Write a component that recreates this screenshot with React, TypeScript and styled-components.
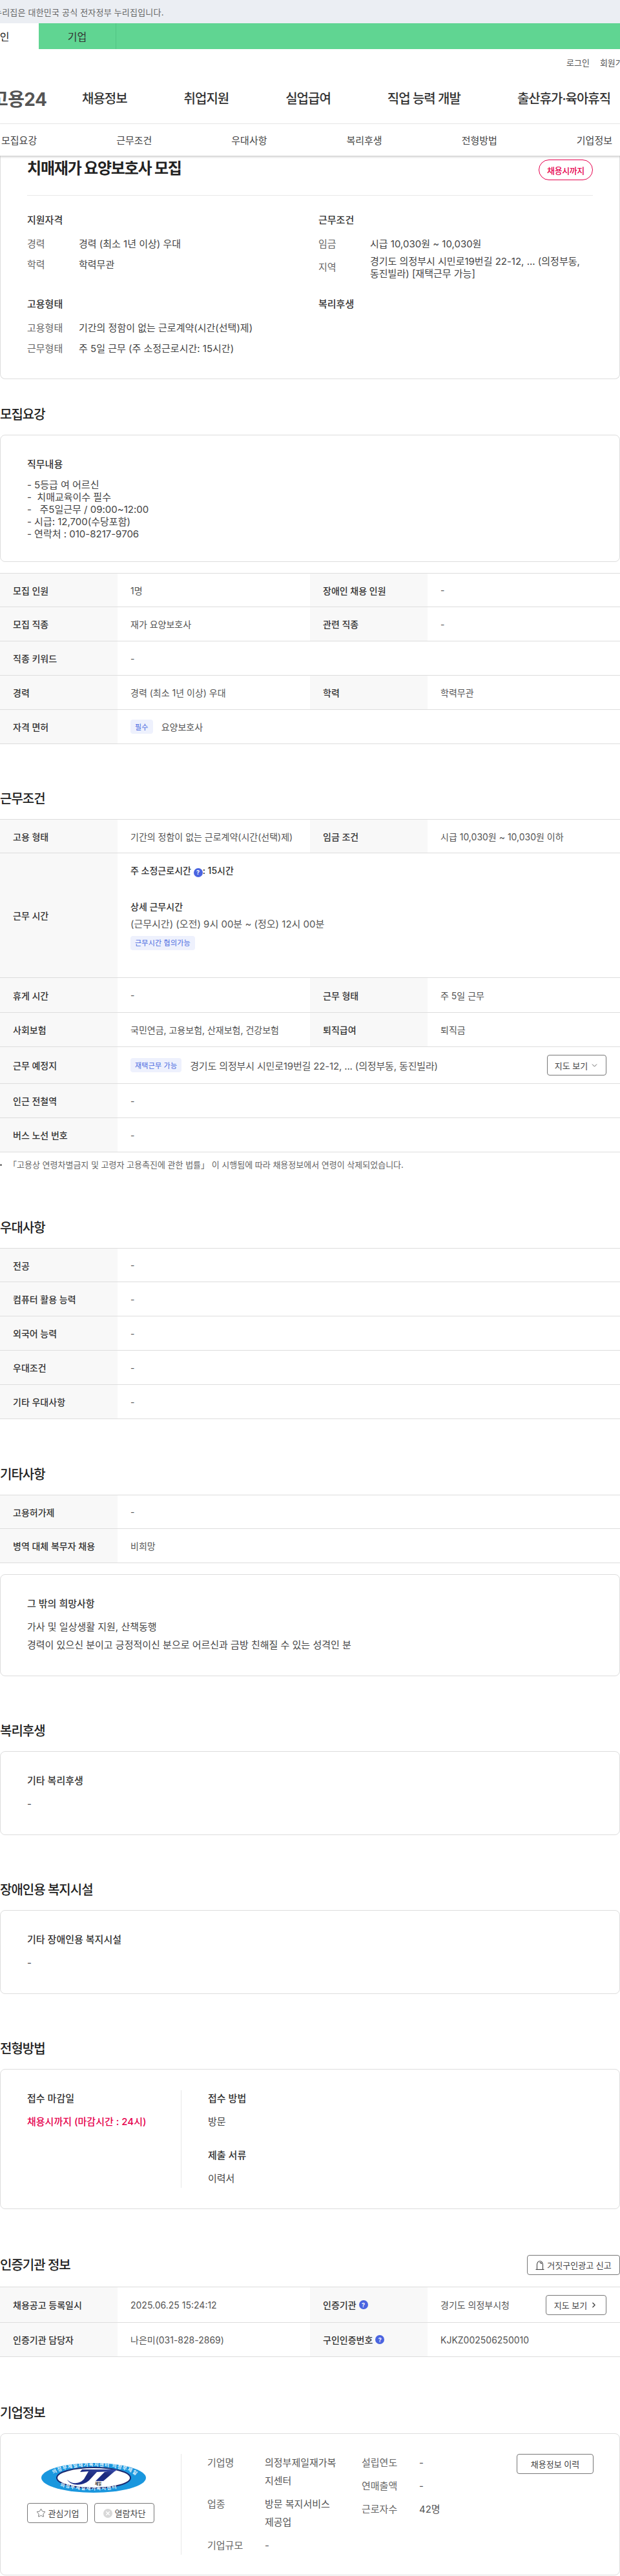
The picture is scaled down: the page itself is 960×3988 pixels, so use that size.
import styled, { createGlobalStyle } from 'styled-components';
import type { ReactNode } from 'react';
import { ChevronDown, ChevronRight, Star } from 'lucide-react';

const GlobalStyle = createGlobalStyle`
  html, body {
    margin: 0;
    padding: 0;
    background: #fff;
    color: #444;
    font-family: Inter, 'Noto Sans CJK KR', 'Noto Sans', sans-serif;
    font-size: 14px;
  }
  * { box-sizing: border-box; }
`;

const NAV_ITEMS = ['채용정보', '취업지원', '실업급여', '직업 능력 개발', '출산휴가·육아휴직'];
const ANCHORS = ['모집요강', '근무조건', '우대사항', '복리후생', '전형방법', '기업정보'];

interface Cell {
  label: ReactNode;
  value: ReactNode;
}

const QuestionMark = () => <HelpBadge>?</HelpBadge>;

const Row = ({ cells, height }: { cells: Cell[]; height?: number }) => (
  <TableRow $split={cells.length > 1} $height={height ?? 53}>
    {cells.map((cell, i) => (
      <RowPart key={i}>
        <LabelCell>{cell.label}</LabelCell>
        <ValueCell>{cell.value}</ValueCell>
      </RowPart>
    ))}
  </TableRow>
);

const CompanyLogo = () => (
  <LogoSvg viewBox="0 0 162 46" aria-label="제일 로고">
    <defs>
      <linearGradient id="jiFill" x1="0" y1="1" x2="1" y2="0">
        <stop offset="0" stopColor="#1d2f8f" />
        <stop offset="0.5" stopColor="#1c2a7c" />
        <stop offset="1" stopColor="#3a4fb0" />
      </linearGradient>
      <path id="ringTop" d="M14 24 A67 19 0 0 1 148 24" />
      <path id="ringBottom" d="M10 22 A71 20 0 0 0 152 22" />
    </defs>
    <ellipse cx="81" cy="23" rx="81" ry="23" fill="#1a97de" />
    <ellipse cx="81" cy="23" rx="57" ry="16" fill="#fff" stroke="#1b2a70" strokeWidth="2" />
    <text fill="#e8f6ff" fontSize="7.5" fontWeight="700" letterSpacing="1.2">
      <textPath href="#ringTop" startOffset="6%">의정부제일재가복지센터 의정부제일</textPath>
    </text>
    <text fill="#e8f6ff" fontSize="7.5" fontWeight="700" letterSpacing="1.2">
      <textPath href="#ringBottom" startOffset="16%">의정부제일재가복지센터</textPath>
    </text>
    <path d="M40 26 C48 34 60 32 66 25 L73 13 L60 14 L63 10 L117 10 L114 13 L86 14 L74 27 C64 36 46 36 40 26 Z" fill="url(#jiFill)" />
    <path d="M98 14 L117 10 L96 28 L84 28 Z" fill="url(#jiFill)" />
    <text x="88" y="34" textAnchor="middle" fontSize="5.5" fontWeight="700" fill="#222">제일</text>
  </LogoSvg>
);

export default function App() {
  return (
    <>
      <GlobalStyle />
      <Page>
        <NoticeBar>
          <NoticeText>이 누리집은 대한민국 공식 전자정부 누리집입니다.</NoticeText>
        </NoticeBar>
        <TabBar>
          <ActiveTab>
            <ClippedTabText>개인</ClippedTabText>
          </ActiveTab>
          <CompanyTab>기업</CompanyTab>
        </TabBar>
        <UtilRow>
          <UtilLink>로그인</UtilLink>
          <UtilLink>회원가입</UtilLink>
        </UtilRow>
        <MainNav>
          <Logo>고용24</Logo>
          <NavList>
            {NAV_ITEMS.map((item) => (
              <NavItem key={item}>{item}</NavItem>
            ))}
          </NavList>
        </MainNav>
        <AnchorNav>
          {ANCHORS.map((item) => (
            <AnchorItem key={item}>{item}</AnchorItem>
          ))}
        </AnchorNav>

        <SummaryCard>
          <SummaryHead>
            <JobTitle>치매재가 요양보호사 모집</JobTitle>
            <DeadlinePill>채용시까지</DeadlinePill>
          </SummaryHead>
          <SummaryGrid>
            <div>
              <CardHeading>지원자격</CardHeading>
              <SummaryRow>
                <SummaryLabel>경력</SummaryLabel>
                <span>경력 (최소 1년 이상) 우대</span>
              </SummaryRow>
              <SummaryRow>
                <SummaryLabel>학력</SummaryLabel>
                <span>학력무관</span>
              </SummaryRow>
            </div>
            <div>
              <CardHeading>근무조건</CardHeading>
              <SummaryRow>
                <SummaryLabel>임금</SummaryLabel>
                <span>시급 10,030원 ~ 10,030원</span>
              </SummaryRow>
              <SummaryRow $tight>
                <SummaryLabel>지역</SummaryLabel>
                <AddressText>
                  경기도 의정부시 시민로19번길 22-12, ... (의정부동,
                  <br />
                  동진빌라) [재택근무 가능]
                </AddressText>
              </SummaryRow>
            </div>
            <div>
              <CardHeading>고용형태</CardHeading>
              <SummaryRow>
                <SummaryLabel>고용형태</SummaryLabel>
                <span>기간의 정함이 없는 근로계약(시간(선택)제)</span>
              </SummaryRow>
              <SummaryRow>
                <SummaryLabel>근무형태</SummaryLabel>
                <span>주 5일 근무 (주 소정근로시간: 15시간)</span>
              </SummaryRow>
            </div>
            <div>
              <CardHeading>복리후생</CardHeading>
            </div>
          </SummaryGrid>
        </SummaryCard>

        <Section $top={41}>
          <SectionTitle>모집요강</SectionTitle>
          <Card>
            <CardHeading>직무내용</CardHeading>
            <JobLines>
              {'- 5등급 여 어르신\n-  치매교육이수 필수\n-   주5일근무 / 09:00~12:00\n- 시급: 12,700(수당포함)\n- 연락처 : 010-8217-9706'}
            </JobLines>
          </Card>
          <Table $top={17}>
            <Row cells={[{ label: '모집 인원', value: '1명' }, { label: '장애인 채용 인원', value: '-' }]} />
            <Row cells={[{ label: '모집 직종', value: '재가 요양보호사' }, { label: '관련 직종', value: '-' }]} />
            <Row cells={[{ label: '직종 키워드', value: '-' }]} />
            <Row cells={[{ label: '경력', value: '경력 (최소 1년 이상) 우대' }, { label: '학력', value: '학력무관' }]} />
            <Row
              cells={[
                {
                  label: '자격 면허',
                  value: (
                    <InlineGroup>
                      <Tag>필수</Tag>
                      <span>요양보호사</span>
                    </InlineGroup>
                  ),
                },
              ]}
            />
          </Table>
        </Section>

        <Section $top={71}>
          <SectionTitle>근무조건</SectionTitle>
          <Table>
            <Row
              cells={[
                { label: '고용 형태', value: '기간의 정함이 없는 근로계약(시간(선택)제)' },
                { label: '임금 조건', value: '시급 10,030원 ~ 10,030원 이하' },
              ]}
            />
            <Row
              height={193}
              cells={[
                {
                  label: '근무 시간',
                  value: (
                    <HoursBlock>
                      <HoursStrong>
                        주 소정근로시간 <QuestionMark />: 15시간
                      </HoursStrong>
                      <HoursDetailHead>상세 근무시간</HoursDetailHead>
                      <HoursLine>(근무시간) (오전) 9시 00분 ~ (정오) 12시 00분</HoursLine>
                      <HoursTag>근무시간 협의가능</HoursTag>
                    </HoursBlock>
                  ),
                },
              ]}
            />
            <Row height={54} cells={[{ label: '휴게 시간', value: '-' }, { label: '근무 형태', value: '주 5일 근무' }]} />
            <Row
              cells={[
                { label: '사회보험', value: '국민연금, 고용보험, 산재보험, 건강보험' },
                { label: '퇴직급여', value: '퇴직금' },
              ]}
            />
            <Row
              height={57}
              cells={[
                {
                  label: '근무 예정지',
                  value: (
                    <SpreadGroup>
                      <InlineGroup>
                        <Tag>재택근무 가능</Tag>
                        <AddressLine>경기도 의정부시 시민로19번길 22-12, ... (의정부동, 동진빌라)</AddressLine>
                      </InlineGroup>
                      <OutlineButton $width={92} $height={32}>
                        지도 보기 <ChevronDown size={13} strokeWidth={1.5} />
                      </OutlineButton>
                    </SpreadGroup>
                  ),
                },
              ]}
            />
            <Row cells={[{ label: '인근 전철역', value: '-' }]} />
            <Row cells={[{ label: '버스 노선 번호', value: '-' }]} />
          </Table>
          <FootNote>「고용상 연령차별금지 및 고령자 고용촉진에 관한 법률」 이 시행됨에 따라 채용정보에서 연령이 삭제되었습니다.</FootNote>
        </Section>

        <Section $top={74}>
          <SectionTitle>우대사항</SectionTitle>
          <Table>
            <Row cells={[{ label: '전공', value: '-' }]} />
            <Row cells={[{ label: '컴퓨터 활용 능력', value: '-' }]} />
            <Row cells={[{ label: '외국어 능력', value: '-' }]} />
            <Row cells={[{ label: '우대조건', value: '-' }]} />
            <Row cells={[{ label: '기타 우대사항', value: '-' }]} />
          </Table>
        </Section>

        <Section $top={72}>
          <SectionTitle>기타사항</SectionTitle>
          <Table>
            <Row cells={[{ label: '고용허가제', value: '-' }]} />
            <Row cells={[{ label: '병역 대체 복무자 채용', value: '비희망' }]} />
          </Table>
          <Card $top={17}>
            <CardHeading>그 밖의 희망사항</CardHeading>
            <CardBody>
              가사 및 일상생활 지원, 산책동행
              <br />
              경력이 있으신 분이고 긍정적이신 분으로 어르신과 금방 친해질 수 있는 성격인 분
            </CardBody>
          </Card>
        </Section>

        <Section $top={71}>
          <SectionTitle>복리후생</SectionTitle>
          <Card>
            <CardHeading>기타 복리후생</CardHeading>
            <CardBody>-</CardBody>
          </Card>
        </Section>

        <Section $top={71}>
          <SectionTitle>장애인용 복지시설</SectionTitle>
          <Card>
            <CardHeading>기타 장애인용 복지시설</CardHeading>
            <CardBody>-</CardBody>
          </Card>
        </Section>

        <Section $top={71}>
          <SectionTitle>전형방법</SectionTitle>
          <SplitCard>
            <SplitLeft>
              <CardHeading>접수 마감일</CardHeading>
              <DeadlineText>채용시까지 (마감시간 : 24시)</DeadlineText>
            </SplitLeft>
            <SplitRight>
              <CardHeading>접수 방법</CardHeading>
              <CardBody>방문</CardBody>
              <SpacedHeading>제출 서류</SpacedHeading>
              <CardBody>이력서</CardBody>
            </SplitRight>
          </SplitCard>
        </Section>

        <Section $top={71}>
          <TitleRow>
            <SectionTitle>인증기관 정보</SectionTitle>
            <OutlineButton $width={144} $height={31}>
              <svg width="14" height="16" viewBox="0 0 14 16" fill="none" stroke="#444" strokeWidth="1.1">
                <path d="M2.5 14V7a4.5 5.5 0 0 1 9 0v7" />
                <path d="M0.5 14.5h13" />
                <path d="M6.5 3.6a3 3 0 0 1 3 2.4" />
              </svg>
              거짓구인광고 신고
            </OutlineButton>
          </TitleRow>
          <Table>
            <Row
              height={56}
              cells={[
                { label: '채용공고 등록일시', value: '2025.06.25 15:24:12' },
                {
                  label: (
                    <>
                      인증기관 <QuestionMark />
                    </>
                  ),
                  value: (
                    <SpreadGroup>
                      <span>경기도 의정부시청</span>
                      <OutlineButton $width={94} $height={31}>
                        지도 보기 <ChevronRight size={13} strokeWidth={2.5} />
                      </OutlineButton>
                    </SpreadGroup>
                  ),
                },
              ]}
            />
            <Row
              cells={[
                { label: '인증기관 담당자', value: '나은미(031-828-2869)' },
                {
                  label: (
                    <>
                      구인인증번호 <QuestionMark />
                    </>
                  ),
                  value: 'KJKZ002506250010',
                },
              ]}
            />
          </Table>
        </Section>

        <Section $top={73}>
          <SectionTitle>기업정보</SectionTitle>
          <CompanyCard>
            <CompanyLeft>
              <CompanyLogo />
              <CompanyActions>
                <OutlineButton $width={94} $height={31}>
                  <Star size={15} strokeWidth={1.3} color="#555" /> 관심기업
                </OutlineButton>
                <OutlineButton $width={93} $height={31}>
                  <svg width="14" height="14" viewBox="0 0 14 14">
                    <circle cx="7" cy="7" r="7" fill="#d8d8d8" />
                    <path d="M4.3 4.3l5.4 5.4M9.7 4.3L4.3 9.7" stroke="#fff" strokeWidth="1.4" />
                  </svg>
                  열람차단
                </OutlineButton>
              </CompanyActions>
            </CompanyLeft>
            <CompanyRight>
              <CompanyList>
                <CompanyItem>
                  <CompanyLabel>기업명</CompanyLabel>
                  <CompanyValue>의정부제일재가복지센터</CompanyValue>
                </CompanyItem>
                <CompanyItem>
                  <CompanyLabel>업종</CompanyLabel>
                  <CompanyValue>방문 복지서비스 제공업</CompanyValue>
                </CompanyItem>
                <CompanyItem>
                  <CompanyLabel>기업규모</CompanyLabel>
                  <CompanyValue>-</CompanyValue>
                </CompanyItem>
              </CompanyList>
              <CompanyList>
                <CompanyItem>
                  <CompanyLabel>설립연도</CompanyLabel>
                  <CompanyValue>-</CompanyValue>
                </CompanyItem>
                <CompanyItem>
                  <CompanyLabel>연매출액</CompanyLabel>
                  <CompanyValue>-</CompanyValue>
                </CompanyItem>
                <CompanyItem>
                  <CompanyLabel>근로자수</CompanyLabel>
                  <CompanyValue>42명</CompanyValue>
                </CompanyItem>
              </CompanyList>
              <OutlineButton $width={119} $height={31}>
                채용정보 이력
              </OutlineButton>
            </CompanyRight>
          </CompanyCard>
        </Section>
      </Page>
    </>
  );
}

const Page = styled.div`
  width: 960px;
  height: 3988px;
  overflow: hidden;
`;

const NoticeBar = styled.div`
  height: 36px;
  display: flex;
  align-items: center;
  background: #ebeef3;
  color: #666;
  font-size: 13px;
`;

const NoticeText = styled.span`
  margin-left: -25px;
  letter-spacing: 0.2px;
  white-space: nowrap;
`;

const TabBar = styled.div`
  height: 40px;
  display: flex;
  background: #60d592;
  font-size: 16px;
`;

const ActiveTab = styled.div`
  width: 60px;
  display: flex;
  align-items: center;
  background: #fff;
  color: #222;
`;

const ClippedTabText = styled.span`
  margin-left: -15px;
  white-space: nowrap;
`;

const CompanyTab = styled.div`
  width: 120px;
  display: flex;
  align-items: center;
  justify-content: center;
  border-right: 1px solid #52c583;
  color: #333;
`;

const UtilRow = styled.div`
  height: 40px;
  padding-left: 877px;
  display: flex;
  align-items: center;
  gap: 16px;
  white-space: nowrap;
  overflow: hidden;
  font-size: 13px;
  color: #555;
`;

const UtilLink = styled.span``;

const MainNav = styled.div`
  height: 76px;
  padding-bottom: 4px;
  display: flex;
  align-items: center;
  border-bottom: 1px solid #e8e8e8;
  white-space: nowrap;
`;

const Logo = styled.div`
  width: 127px;
  flex: none;
  margin-left: -13px;
  font-size: 28px;
  font-weight: 700;
  letter-spacing: -0.6px;
  color: #555;
`;

const NavList = styled.div`
  margin-left: 13px;
  display: flex;
  gap: 88px;
`;

const NavItem = styled.div`
  font-size: 20px;
  font-weight: 500;
  letter-spacing: -1px;
  color: #333;
`;

const AnchorNav = styled.div`
  position: relative;
  z-index: 1;
  height: 49px;
  padding: 0 12px 0 2px;
  display: flex;
  align-items: center;
  justify-content: space-between;
  background: #fff;
  box-shadow: 0 2px 3px rgba(0, 0, 0, 0.2);
  font-size: 15px;
  color: #444;
`;

const AnchorItem = styled.div``;

const SummaryCard = styled.div`
  padding: 6px 41px 36px;
  border: 1px solid #ddd;
  border-top: 0;
  border-radius: 0 0 8px 8px;
  font-size: 15px;
`;

const SummaryHead = styled.div`
  height: 56px;
  display: flex;
  align-items: flex-start;
  justify-content: space-between;
  border-bottom: 1px solid #e8e8e8;
`;

const JobTitle = styled.h1`
  margin: 0;
  font-size: 24px;
  line-height: 28px;
  font-weight: 700;
  letter-spacing: -1.2px;
  color: #222;
`;

const DeadlinePill = styled.div`
  width: 84px;
  height: 32px;
  display: flex;
  align-items: center;
  justify-content: center;
  border: 1px solid #e6004d;
  border-radius: 16px;
  color: #e6004d;
  font-size: 13px;
  font-weight: 500;
  letter-spacing: -0.4px;
`;

const SummaryGrid = styled.div`
  padding-top: 28px;
  display: grid;
  grid-template-columns: 451px 1fr;
  row-gap: 28px;
`;

const CardHeading = styled.div`
  font-size: 15px;
  line-height: 20px;
  font-weight: 500;
  color: #333;
`;

const SummaryRow = styled.div<{ $tight?: boolean }>`
  margin-top: ${({ $tight }) => ($tight ? '7px' : '12px')};
  display: flex;
  align-items: center;
  line-height: 20px;

  ${CardHeading} + & {
    margin-top: 17px;
  }
`;

const SummaryLabel = styled.span`
  width: 80px;
  flex: none;
  color: #666;
`;

const AddressText = styled.span`
  line-height: 19px;
  white-space: nowrap;
`;

const Section = styled.section<{ $top: number }>`
  margin-top: ${({ $top }) => $top}px;
`;

const SectionTitle = styled.h2`
  margin: 0 0 17px;
  font-size: 20px;
  line-height: 28px;
  font-weight: 500;
  letter-spacing: -1px;
  color: #222;
`;

const TitleRow = styled.div`
  display: flex;
  justify-content: space-between;
  align-items: center;
  margin-bottom: 18px;

  ${SectionTitle} {
    margin: 0;
  }
`;

const Card = styled.div<{ $top?: number }>`
  margin-top: ${({ $top }) => $top ?? 0}px;
  padding: 35px 41px 33px;
  border: 1px solid #ddd;
  border-radius: 8px;
  font-size: 15px;
`;

const JobLines = styled.div`
  margin-top: 12px;
  font-size: 15px;
  line-height: 19px;
  white-space: pre-wrap;
`;

const CardBody = styled.div`
  margin-top: 12px;
  font-size: 15px;
  line-height: 28px;
`;

const Table = styled.div<{ $top?: number }>`
  margin-top: ${({ $top }) => $top ?? 0}px;
  border-top: 1px solid #ddd;
`;

const TableRow = styled.div<{ $split: boolean; $height: number }>`
  min-height: ${({ $height }) => $height}px;
  display: grid;
  grid-template-columns: ${({ $split }) => ($split ? '480px 480px' : '960px')};
  border-bottom: 1px solid #ddd;

  &:first-child {
    min-height: ${({ $height }) => $height - 1}px;
  }
`;

const RowPart = styled.div`
  display: grid;
  grid-template-columns: 182px 1fr;
`;

const LabelCell = styled.div`
  padding: 0 12px 0 20px;
  display: flex;
  align-items: center;
  gap: 4px;
  background: #f8f8f8;
  font-weight: 500;
  color: #333;
`;

const ValueCell = styled.div`
  padding: 0 13px 0 20px;
  display: flex;
  align-items: center;
  color: #555;
  white-space: nowrap;
`;

const InlineGroup = styled.div`
  display: flex;
  align-items: center;
  gap: 13px;
`;

const SpreadGroup = styled.div`
  width: 100%;
  display: flex;
  align-items: center;
  justify-content: space-between;
  margin-right: 8px;
`;

const Tag = styled.span`
  height: 22px;
  padding: 0 7px;
  display: inline-flex;
  align-items: center;
  border-radius: 4px;
  background: #eef1fd;
  color: #4a6ae0;
  font-size: 11px;
  letter-spacing: 0.2px;
`;

const AddressLine = styled.span`
  font-size: 15px;
  letter-spacing: -0.15px;
`;

const HelpBadge = styled.span`
  width: 14px;
  height: 14px;
  display: inline-flex;
  align-items: center;
  justify-content: center;
  vertical-align: -1px;
  border-radius: 50%;
  background: #4a64e0;
  color: #fff;
  font-size: 9px;
  font-weight: 700;
`;

const HoursBlock = styled.div`
  align-self: flex-start;
  padding-top: 17px;
  line-height: 20px;
`;

const HoursStrong = styled.div`
  font-weight: 500;
  color: #333;
`;

const HoursDetailHead = styled.div`
  margin-top: 36px;
  font-weight: 500;
  color: #333;
`;

const HoursLine = styled.div`
  margin-top: 7px;
  font-size: 15px;
`;

const HoursTag = styled(Tag)`
  margin-top: 8px;
`;

const OutlineButton = styled.button<{ $width: number; $height: number }>`
  width: ${({ $width }) => $width}px;
  height: ${({ $height }) => $height}px;
  flex: none;
  padding: 0;
  display: inline-flex;
  align-items: center;
  justify-content: center;
  gap: 4px;
  border: 1px solid #777;
  border-radius: 4px;
  background: #fff;
  color: #444;
  font-family: inherit;
  font-size: 13px;
  white-space: nowrap;
`;

const FootNote = styled.p`
  position: relative;
  margin: 9px 0 0;
  padding-left: 13px;
  font-size: 13px;
  line-height: 20px;
  color: #666;
  white-space: nowrap;

  &::before {
    content: '';
    position: absolute;
    left: 0;
    top: 9px;
    width: 3px;
    height: 3px;
    border-radius: 50%;
    background: #666;
  }
`;

const SplitCard = styled.div`
  padding: 32px 41px;
  display: grid;
  grid-template-columns: 239px 1fr;
  border: 1px solid #ddd;
  border-radius: 8px;
  font-size: 15px;
`;

const SplitLeft = styled.div`
  padding-top: 3px;
  border-right: 1px solid #e8e8e8;
`;

const SplitRight = styled.div`
  padding: 3px 0 0 41px;
`;

const DeadlineText = styled.div`
  margin-top: 12px;
  line-height: 28px;
  font-weight: 500;
  color: #e6004d;
`;

const SpacedHeading = styled(CardHeading)`
  margin-top: 28px;
`;

const CompanyCard = styled.div`
  display: grid;
  grid-template-columns: 239px 1fr;
  padding: 31px 41px;
  border: 1px solid #ddd;
  border-radius: 8px;
  font-size: 15px;
`;

const CompanyLeft = styled.div`
  height: 156px;
  padding-top: 14px;
  border-right: 1px solid #e8e8e8;
`;

const LogoSvg = styled.svg`
  display: block;
  width: 162px;
  height: 46px;
  margin-left: 22px;
`;

const CompanyActions = styled.div`
  margin-top: 16px;
  display: flex;
  gap: 10px;
`;

const CompanyRight = styled.div`
  padding-left: 40px;
  display: flex;
  align-items: flex-start;
`;

const CompanyList = styled.div`
  width: 239px;
  display: flex;
  flex-direction: column;
  gap: 8px;

  &:nth-child(2) {
    width: 240px;
  }
`;

const CompanyItem = styled.div`
  display: flex;
  line-height: 28px;
`;

const CompanyLabel = styled.div`
  width: 89px;
  flex: none;
  color: #666;
`;

const CompanyValue = styled.div`
  width: 112px;
  color: #555;
`;
